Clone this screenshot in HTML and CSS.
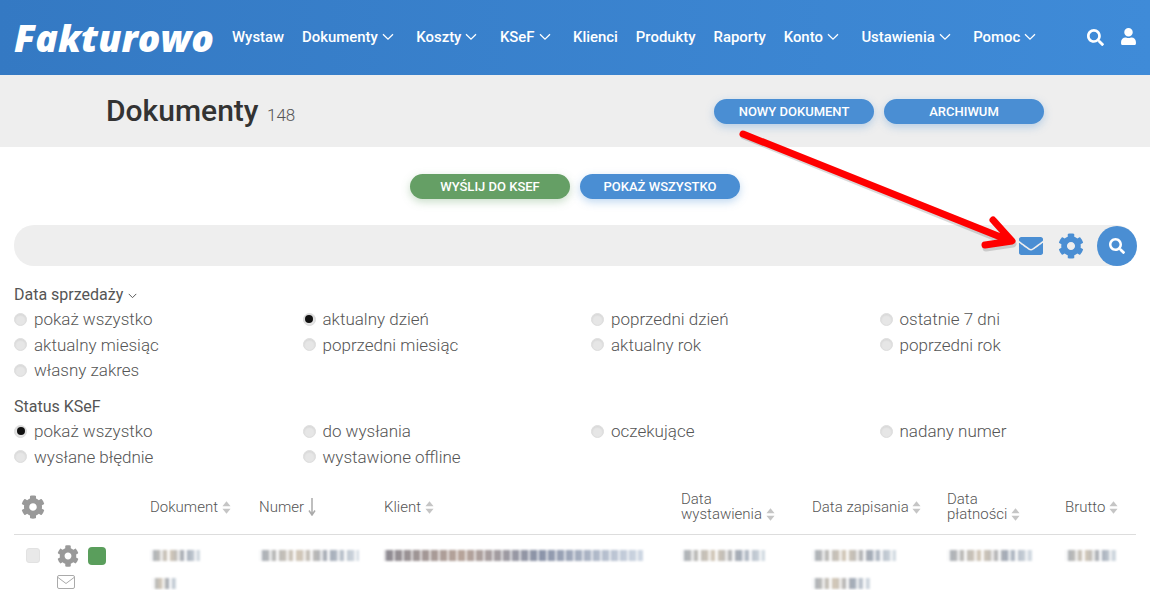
FILE: index.html
```html
<!DOCTYPE html>
<html lang="pl">
<head>
<meta charset="utf-8">
<title>Fakturowo - Dokumenty</title>
<link rel="stylesheet" href="styles.css">
</head>
<body>
<svg class="defs" aria-hidden="true">
  <symbol id="cog" viewBox="0 0 512 512"><path d="M487.4 315.7l-42.6-24.6c4.3-23.2 4.3-47 0-70.2l42.6-24.6c4.9-2.8 7.1-8.6 5.5-14-11.1-35.6-30-67.8-54.7-94.6-3.8-4.1-10-5.1-14.8-2.3L380.8 110c-17.9-15.4-38.5-27.3-60.8-35.1V25.8c0-5.6-3.9-10.5-9.4-11.7-36.7-8.2-74.3-7.8-109.2 0-5.5 1.2-9.4 6.1-9.4 11.7V75c-22.2 7.9-42.8 19.8-60.8 35.1L88.7 85.5c-4.9-2.8-11-1.9-14.8 2.3-24.7 26.7-43.6 58.9-54.7 94.6-1.7 5.4.6 11.2 5.5 14L67.3 221c-4.3 23.2-4.3 47 0 70.2l-42.6 24.6c-4.9 2.8-7.1 8.6-5.5 14 11.1 35.6 30 67.8 54.7 94.6 3.8 4.1 10 5.1 14.8 2.3l42.6-24.6c17.9 15.4 38.5 27.3 60.8 35.1v49.2c0 5.6 3.9 10.5 9.4 11.7 36.7 8.2 74.3 7.8 109.2 0 5.5-1.2 9.4-6.1 9.4-11.7v-49.2c22.2-7.9 42.8-19.8 60.8-35.1l42.6 24.6c4.9 2.8 11 1.9 14.8-2.3 24.7-26.7 43.6-58.9 54.7-94.6 1.5-5.5-.7-11.3-5.6-14.1zM256 336c-44.1 0-80-35.9-80-80s35.9-80 80-80 80 35.9 80 80-35.9 80-80 80z"/></symbol>
  <symbol id="search" viewBox="0 0 512 512"><path d="M505 442.7L405.3 343c-4.5-4.5-10.6-7-17-7H372c27.6-35.3 44-79.7 44-128C416 93.1 322.9 0 208 0S0 93.1 0 208s93.1 208 208 208c48.3 0 92.7-16.4 128-44v16.3c0 6.4 2.5 12.5 7 17l99.7 99.7c9.4 9.4 24.6 9.4 33.9 0l28.3-28.3c9.4-9.4 9.4-24.6.1-34zM208 336c-70.7 0-128-57.2-128-128 0-70.7 57.2-128 128-128 70.7 0 128 57.2 128 128 0 70.7-57.2 128-128 128z"/></symbol>
  <symbol id="user" viewBox="0 0 448 512"><path d="M224 256c70.7 0 128-57.3 128-128S294.7 0 224 0 96 57.3 96 128s57.3 128 128 128zm89.6 32h-16.7c-22.2 10.2-46.9 16-72.9 16s-50.6-5.8-72.9-16h-16.7C60.2 288 0 348.2 0 422.4V464c0 26.5 21.5 48 48 48h352c26.5 0 48-21.5 48-48v-41.6c0-74.2-60.2-134.4-134.4-134.4z"/></symbol>
  <symbol id="chev" viewBox="0 0 12 8"><path d="M1 1.2l5 5 5-5" fill="none" stroke="currentColor" stroke-width="1.3"/></symbol>
  <symbol id="sort" viewBox="0 0 10 14"><path d="M5 0l4.5 5.6H.5zM5 14L.5 8.4h9z"/></symbol>
  <symbol id="mail" viewBox="0 0 512 512"><path d="M502.3 190.8c3.9-3.1 9.7-.2 9.7 4.7V400c0 26.5-21.5 48-48 48H48c-26.5 0-48-21.5-48-48V195.6c0-5 5.7-7.8 9.7-4.7 22.4 17.4 52.1 39.5 154.1 113.6 21.1 15.4 56.7 47.8 92.2 47.6 35.7.3 72-32.8 92.3-47.6 102-74.1 131.6-96.3 154-113.7zM256 320c23.2.4 56.6-29.2 73.4-41.4 132.7-96.3 142.8-104.7 173.4-128.7 5.8-4.5 9.2-11.5 9.2-18.9v-19c0-26.5-21.5-48-48-48H48C21.5 64 0 85.5 0 112v19c0 7.4 3.4 14.3 9.2 18.9 30.6 23.9 40.7 32.4 173.4 128.7 16.8 12.2 50.2 41.8 73.4 41.4z"/></symbol>
</svg>

<header class="topbar">
  <a class="logo">Fakturowo</a>
  <nav class="nav">
    <a>Wystaw</a>
    <a class="drop">Dokumenty <svg class="chev"><use href="#chev"/></svg></a>
    <a class="drop">Koszty <svg class="chev"><use href="#chev"/></svg></a>
    <a class="drop">KSeF <svg class="chev"><use href="#chev"/></svg></a>
    <a>Klienci</a>
    <a>Produkty</a>
    <a>Raporty</a>
    <a class="drop">Konto <svg class="chev"><use href="#chev"/></svg></a>
    <a class="drop">Ustawienia <svg class="chev"><use href="#chev"/></svg></a>
    <a class="drop">Pomoc <svg class="chev"><use href="#chev"/></svg></a>
  </nav>
  <div class="top-icons">
    <svg class="ti-search"><use href="#search"/></svg>
    <svg class="ti-user"><use href="#user"/></svg>
  </div>
</header>

<section class="subhead">
  <h1 class="title">Dokumenty <small>148</small></h1>
  <div class="btn-row">
    <a class="btn">Nowy dokument</a>
    <a class="btn">Archiwum</a>
  </div>
</section>

<main class="content">
  <div class="btn-row center">
    <a class="btn green">Wyślij do KSeF</a>
    <a class="btn">Pokaż wszystko</a>
  </div>

  <div class="searchbar">
    <svg class="sb-mail"><use href="#mail"/></svg>
    <svg class="sb-cog"><use href="#cog"/></svg>
    <span class="sb-go"><svg><use href="#search"/></svg></span>
  </div>

  <section class="filter first">
    <h2 class="filter-title">Data sprzedaży <svg class="chev small"><use href="#chev"/></svg></h2>
    <div class="radios">
      <label class="radio"><i></i>pokaż wszystko</label>
      <label class="radio on"><i></i>aktualny dzień</label>
      <label class="radio"><i></i>poprzedni dzień</label>
      <label class="radio"><i></i>ostatnie 7 dni</label>
      <label class="radio"><i></i>aktualny miesiąc</label>
      <label class="radio"><i></i>poprzedni miesiąc</label>
      <label class="radio"><i></i>aktualny rok</label>
      <label class="radio"><i></i>poprzedni rok</label>
      <label class="radio"><i></i>własny zakres</label>
    </div>
  </section>

  <section class="filter">
    <h2 class="filter-title">Status KSeF</h2>
    <div class="radios">
      <label class="radio on"><i></i>pokaż wszystko</label>
      <label class="radio"><i></i>do wysłania</label>
      <label class="radio"><i></i>oczekujące</label>
      <label class="radio"><i></i>nadany numer</label>
      <label class="radio"><i></i>wysłane błędnie</label>
      <label class="radio"><i></i>wystawione offline</label>
    </div>
  </section>

  <section class="table">
    <div class="thead">
      <div class="th-gear"><svg><use href="#cog"/></svg></div>
      <div>Dokument <svg class="sort"><use href="#sort"/></svg></div>
      <div>Numer <svg class="sort-down" viewBox="0 0 8 18"><path d="M4 0v16M1 12.500L4 17l3-4.500" fill="none" stroke="currentColor" stroke-width="1.500"/></svg></div>
      <div>Klient <svg class="sort"><use href="#sort"/></svg></div>
      <div>Data<br>wystawienia <svg class="sort"><use href="#sort"/></svg></div>
      <div>Data zapisania <svg class="sort"><use href="#sort"/></svg></div>
      <div>Data<br>płatności <svg class="sort"><use href="#sort"/></svg></div>
      <div>Brutto <svg class="sort"><use href="#sort"/></svg></div>
    </div>
    <div class="trow">
      <div class="actions">
        <span class="check"></span>
        <div class="act-col">
          <svg class="row-cog"><use href="#cog"/></svg>
          <svg class="row-mail" viewBox="0 0 18 14"><rect x=".5" y=".5" width="17" height="13" rx="1.500" fill="none" stroke="currentColor"/><path d="M1 2.500l8 6 8-6" fill="none" stroke="currentColor"/></svg>
        </div>
        <span class="status"></span>
      </div>
      <div><span class="redact w50"></span><span class="redact w24 in"></span></div>
      <div><span class="redact w100"></span></div>
      <div><span class="redact w259 warm"></span></div>
      <div><span class="redact w84"></span></div>
      <div><span class="redact w84"></span><span class="redact w58"></span></div>
      <div><span class="redact w85"></span></div>
      <div><span class="redact w51"></span></div>
    </div>
  </section>
</main>

<svg class="arrow" viewBox="0 0 1150 590" aria-hidden="true">
  <path class="arrow-shadow" d="M743 134L1008 241M994 220l18 22-27 4"/>
  <path class="arrow-line" d="M743 134L1008 240M993 220l19 21-27 4"/>
</svg>
</body>
</html>
```
FILE: styles.css
```css
* { box-sizing: border-box; }
html, body { margin: 0; height: 590px; overflow: hidden; background: #fff; }
body { position: relative; font-family: Roboto, "Liberation Sans", sans-serif; color: #555; }
.defs { position: absolute; width: 0; height: 0; }
svg { fill: currentColor; }

.topbar {
  height: 75px;
  display: flex;
  align-items: center;
  padding: 0 14px 0 14px;
  background: linear-gradient(90deg, #3479c3, #3f8bd8);
  color: #fff;
}
.logo {
  font-family: "Open Sans", sans-serif;
  font-weight: 800;
  font-style: italic;
  font-size: 37.400px;
  line-height: 1;
  width: 218px;
  white-space: nowrap;
}
.nav { display: flex; gap: 18px; margin-top: -2px; font-size: 14.900px; font-weight: 500; }
.nav a { white-space: nowrap; display: flex; align-items: center; gap: 4px; }
.nav a.drop { padding-right: 4.500px; }
.chev { width: 12px; height: 8px; }
.top-icons { margin-left: auto; display: flex; gap: 17px; align-items: center; }
.ti-search { width: 17px; height: 17px; }
.ti-user { width: 15px; height: 17px; margin-top: -3px; }

.subhead {
  height: 72px;
  padding: 24px 106px 0;
  background: #eee;
  display: flex;
  justify-content: space-between;
  align-items: flex-start;
}
.title { margin: -4px 0 0; font-size: 30px; font-weight: 500; line-height: 32px; color: #333; }
.title small { font-size: 17px; font-weight: 300; color: #555; margin-left: 1px; }

.btn-row { display: flex; gap: 10px; }
.btn-row.center { justify-content: center; }
.btn {
  width: 160px;
  height: 25px;
  border-radius: 13px;
  background: #4a8ed3;
  color: #fff;
  font-size: 13px;
  font-weight: 500;
  line-height: 26px;
  text-align: center;
  text-transform: uppercase;
  box-shadow: 0 3px 8px rgba(74, 142, 211, .35);
}
.btn.green { background: #659f65; box-shadow: 0 3px 8px rgba(101, 159, 101, .35); }

.content { padding: 27px 14px 0; }
.searchbar {
  margin-top: 26px;
  height: 41px;
  border-radius: 20px;
  background: #eee;
  display: flex;
  align-items: center;
  justify-content: flex-end;
  color: #4a8ed3;
}
.sb-mail { width: 24px; height: 24px; }
.sb-cog { width: 26px; height: 26px; margin-left: 15px; }
.sb-go {
  width: 40px;
  height: 40px;
  margin: 1px -1px 0 13px;
  border-radius: 50%;
  background: #4a8ed3;
  color: #fff;
  display: flex;
  align-items: center;
  justify-content: center;
}
.sb-go svg { width: 16px; height: 16px; }

.filter { margin-top: 11px; }
.filter.first { margin-top: 16px; }
.filter-title { margin: 0 0 -1px; padding-top: 1px; font-size: 16px; font-weight: 400; line-height: 24px; color: #555; }
.chev.small { width: 9px; height: 6px; margin-left: 1px; vertical-align: 1px; }
.radios { display: grid; grid-template-columns: repeat(4, 288.500px); padding-top: .4px; }
.radio {
  display: flex;
  align-items: center;
  gap: 7px;
  height: 25.600px;
  font-size: 17px;
  font-weight: 300;
  color: #555;
}
.radio i {
  width: 13px;
  height: 13px;
  border-radius: 50%;
  background: #e6e6e6;
  border: 1px solid #ddd;
  box-shadow: inset 0 1px 2px rgba(0, 0, 0, .08);
  display: flex;
  align-items: center;
  justify-content: center;
}
.radio.on i::after {
  content: "";
  width: 8px;
  height: 8px;
  border-radius: 50%;
  background: #111;
}

.table { margin-top: 18px; font-size: 15px; font-weight: 300; color: #555; }
.thead, .trow {
  display: grid;
  grid-template-columns: 136px 109px 125px 297px 131px 135px 118px 71px;
}
.thead {
  height: 47px;
  align-items: center;
  padding-bottom: 7px;
  border-bottom: 1px solid #ddd;
  line-height: 15px;
}
.th-gear { padding-left: 7px; color: #999; display: flex; }
.th-gear svg { width: 24px; height: 24px; }
.sort { width: 9px; height: 13px; color: #c5c5c5; vertical-align: -2px; }
.sort-down { width: 8px; height: 18px; color: #aaa; vertical-align: -4px; }

.trow { padding-top: 15px; }
.actions { display: flex; align-items: flex-start; padding-left: 12px; margin-top: -3px; }
.check {
  width: 14px;
  height: 15px;
  border-radius: 3px;
  background: #e9e9e9;
  border: 1px solid #e2e2e2;
  margin-top: 1px;
}
.act-col { display: flex; flex-direction: column; margin-left: 17px; color: #999; gap: 8px; width: 31px; margin-top: -2px; }
.row-cog { width: 22px; height: 22px; }
.row-mail { width: 18px; height: 14px; color: #aaa; fill: none; }
.status { width: 18px; height: 18px; border-radius: 4px; background: #5a9e5c; }

.redact {
  display: block;
  height: 11px;
  margin-bottom: 17px;
  filter: blur(.8px);
  background:
    repeating-linear-gradient(90deg, rgba(255,255,255,.9) 0 3px, rgba(255,255,255,0) 3px 10px, rgba(255,255,255,.7) 10px 13px, rgba(255,255,255,0) 13px 17px),
    linear-gradient(90deg, #a9b0b8, #d3c8b8 40%, #a3abb7 70%, #d5dde4);
}
.redact.warm {
  background:
    repeating-linear-gradient(90deg, rgba(255,255,255,.7) 0 2px, rgba(255,255,255,0) 2px 9px),
    linear-gradient(90deg, #8d8a92, #b7a49a 30%, #8a93a8 60%, #cfd8e4);
}
.redact.in { margin-left: 2px; }
.w24 { width: 24px; }
.w50 { width: 50px; }
.w51 { width: 51px; }
.w58 { width: 58px; }
.w84 { width: 84px; }
.w85 { width: 85px; }
.w100 { width: 100px; }
.w259 { width: 259px; }

.arrow { position: absolute; left: 0; top: 0; width: 1150px; height: 590px; pointer-events: none; }
.arrow-line, .arrow-shadow { fill: none; stroke-width: 7px; stroke-linecap: round; stroke-linejoin: round; }
.arrow-line { stroke: #f00; }
.arrow-shadow { stroke: rgba(0, 0, 0, .15); transform: translate(1px, 2px); }
```
